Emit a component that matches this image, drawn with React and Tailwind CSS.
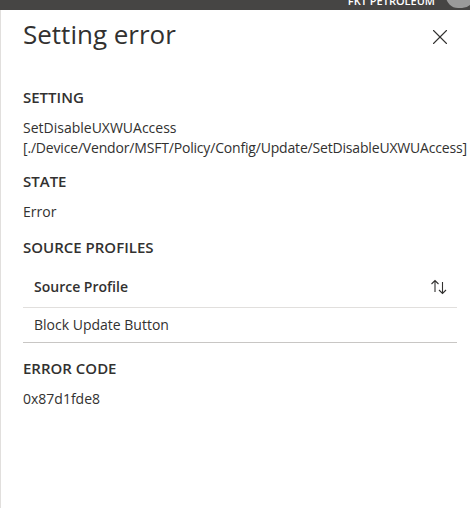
import { X } from 'lucide-react'

function Section({ title, children, className = '', bodyClass = 'mt-[11px]' }) {
  return (
    <div className={className}>
      <h3 className="text-[15px] font-semibold leading-5 text-[#323130]">{title}</h3>
      <div className={`${bodyClass} text-[14px] leading-5 text-[#323130]`}>{children}</div>
    </div>
  )
}

function SortIcon() {
  return (
    <svg width="18" height="16" viewBox="0 0 18 16" fill="none" stroke="#323130" strokeWidth="1.1">
      <path d="M5 13V1.5M1.5 5L5 1.5L8.5 5" />
      <path d="M12.5 3v11.5M9 11l3.5 3.5L16 11" />
    </svg>
  )
}

export default function App() {
  return (
    <div
      className="w-[470px] h-[508px] overflow-hidden bg-white"
      style={{ fontFamily: '"Open Sans", "Noto Sans", sans-serif' }}
    >
      {/* top bar */}
      <div className="relative h-[10px] bg-[#464544] overflow-hidden">
        <span className="absolute right-[35px] -top-[6px] text-[11px] leading-[14px] font-semibold text-white whitespace-nowrap">
          FKT PETROLEUM
        </span>
        <span className="absolute right-[-4px] -top-[16px] h-[24px] w-[28px] rounded-full bg-[#9a9a9a]" />
      </div>

      {/* panel */}
      <div className="h-[498px] border-l border-[#e1dfdd]">
        <div className="flex h-[40px] items-start justify-between pl-[22px] pr-[17px] pt-[8px]">
          <h1 className="text-[26px] leading-8 text-[#323130]">Setting error</h1>
          <button className="mt-[6px] flex text-[#323130]">
            <X size={26} strokeWidth={1} />
          </button>
        </div>

        <div className="pl-[22px] pr-[12px]">
          <Section title="SETTING" className="mt-[37px]">
            <div>SetDisableUXWUAccess</div>
            <div className="whitespace-nowrap tracking-[-0.18px]">
              [./Device/Vendor/MSFT/Policy/Config/Update/SetDisableUXWUAccess]
            </div>
          </Section>

          <Section title="STATE" className="mt-[13px]">
            Error
          </Section>

          <Section title="SOURCE PROFILES" className="mt-[15px]" bodyClass="mt-[9px]">
            <div className="w-[434px]">
              <div className="flex h-[42px] items-center justify-between border-b border-[#e1dfdd] pl-[11px] pr-[9px]">
                <span className="font-semibold">Source Profile</span>
                <SortIcon />
              </div>
              <div className="flex h-[35px] items-center border-b border-[#c8c6c4] pl-[11px]">
                Block Update Button
              </div>
            </div>
          </Section>

          <Section title="ERROR CODE" className="mt-[15px]">
            0x87d1fde8
          </Section>
        </div>
      </div>
    </div>
  )
}
